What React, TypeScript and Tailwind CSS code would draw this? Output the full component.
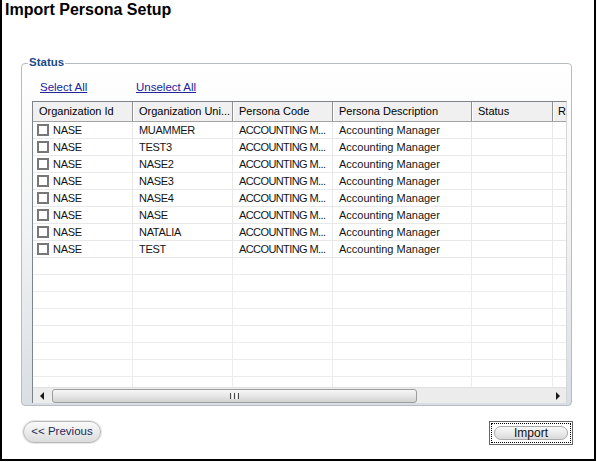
import React from "react";

const rows = ["MUAMMER", "TEST3", "NASE2", "NASE3", "NASE4", "NASE", "NATALIA", "TEST"];
const empty = Array.from({ length: 9 });

const font = { fontFamily: '"Liberation Sans", Arial, sans-serif' };

export default function App() {
  return (
    <div
      className="w-[596px] h-[461px] bg-white border-l-2 border-r-2 border-b-2 border-black flex flex-col"
      style={font}
    >
      <div className="h-[20px] leading-[20px] text-[16px] font-bold text-black pl-[3px]">
        Import Persona Setup
      </div>

      {/* Group box */}
      <div className="relative ml-[19px] mt-[43px] w-[551px] h-[343px] border border-[#b7bcc3] rounded-[4px] bg-gradient-to-b from-white via-[#f1f2f3] to-[#d9dee5] flex flex-col">
        <span className="absolute left-[6px] top-[-8px] px-px bg-white text-[11.5px] leading-[13px] font-bold text-[#1d4a86]">
          Status
        </span>

        <div className="h-[37px] pt-[17px] pl-[18px] flex text-[11.5px] leading-[13px] text-[#23239c]">
          <span className="w-[96px] underline">Select All</span>
          <span className="underline">Unselect All</span>
        </div>

        {/* Grid */}
        <div className="ml-[10px] w-[535px] h-[302px] border-l border-t border-r border-l-[#7f848c] border-t-[#7f848c] border-r-[#d6d6d6] bg-white flex flex-col overflow-hidden">
          {/* header */}
          <div className="h-[20px] flex shrink-0 bg-[#f0f0f0] border-b border-[#a3a3a3] text-[11px] text-black">
            <div className="w-[100px] shrink-0 border-r border-[#8f8f8f] pl-[6px] flex items-center whitespace-nowrap overflow-hidden">Organization Id</div>
            <div className="w-[100px] shrink-0 border-r border-[#8f8f8f] pl-[6px] flex items-center whitespace-nowrap overflow-hidden shadow-[inset_1px_0_0_#ffffff]">Organization Uni...</div>
            <div className="w-[100px] shrink-0 border-r border-[#8f8f8f] pl-[6px] flex items-center whitespace-nowrap overflow-hidden shadow-[inset_1px_0_0_#ffffff]">Persona Code</div>
            <div className="w-[139px] shrink-0 border-r border-[#8f8f8f] pl-[6px] flex items-center whitespace-nowrap overflow-hidden shadow-[inset_1px_0_0_#ffffff]">Persona Description</div>
            <div className="w-[81px] shrink-0 border-r border-[#8f8f8f] pl-[6px] flex items-center whitespace-nowrap overflow-hidden shadow-[inset_1px_0_0_#ffffff]">Status</div>
            <div className="flex-1 pl-[5px] flex items-center whitespace-nowrap overflow-hidden shadow-[inset_1px_0_0_#ffffff]">R</div>
          </div>

          {/* body */}
          <div className="flex-1 overflow-hidden text-[11px] text-[#141414]">
            {rows.map((u, i) => (
              <div key={"r" + i} className="h-[17px] flex border-b border-[#e8e8e8]">
                <div className="w-[100px] shrink-0 border-r border-[#e8e8e8] pl-[4px] flex items-center gap-[4px] whitespace-nowrap overflow-hidden">
                  <span className="w-[12px] h-[12px] border-2 border-[#777777] bg-white shrink-0" />
                  <span className="tracking-[-0.3px]">NASE</span>
                </div>
                <div className="w-[100px] shrink-0 border-r border-[#e8e8e8] pl-[6px] flex items-center whitespace-nowrap overflow-hidden tracking-[-0.3px]">{u}</div>
                <div className="w-[100px] shrink-0 border-r border-[#e8e8e8] pl-[6px] flex items-center whitespace-nowrap overflow-hidden tracking-[-0.6px]">ACCOUNTING M...</div>
                <div className="w-[139px] shrink-0 border-r border-[#e8e8e8] pl-[6px] flex items-center whitespace-nowrap overflow-hidden">Accounting Manager</div>
                <div className="w-[81px] shrink-0 border-r border-[#e8e8e8]" />
                <div className="flex-1" />
              </div>
            ))}
            {empty.map((_, i) => (
              <div key={"e" + i} className="h-[17px] flex border-b border-[#ececec]">
                <div className="w-[100px] shrink-0 border-r border-[#ececec]" />
                <div className="w-[100px] shrink-0 border-r border-[#ececec]" />
                <div className="w-[100px] shrink-0 border-r border-[#ececec]" />
                <div className="w-[139px] shrink-0 border-r border-[#ececec]" />
                <div className="w-[81px] shrink-0 border-r border-[#ececec]" />
                <div className="flex-1" />
              </div>
            ))}
          </div>

          {/* horizontal scrollbar */}
          <div className="h-[16px] shrink-0 flex items-center bg-[#ececec] border-t border-[#e0e0e0]">
            <div className="w-[17px] h-full flex items-center justify-center">
              <span className="w-0 h-0 border-y-[4px] border-y-transparent border-r-[4px] border-r-[#1a1a1a]" />
            </div>
            <div className="ml-[2px] w-[365px] h-[14px] rounded-[3px] border border-[#9c9c9c] bg-gradient-to-b from-[#f7f7f7] via-[#e6e6e6] to-[#d2d2d2] flex items-center justify-center gap-[1px]">
              <span className="w-[1px] h-[6px] bg-[#4a4a4a]" />
              <span className="w-[1px] h-[6px] bg-[#ffffff]" />
              <span className="w-[1px] h-[6px] bg-[#4a4a4a]" />
              <span className="w-[1px] h-[6px] bg-[#ffffff]" />
              <span className="w-[1px] h-[6px] bg-[#4a4a4a]" />
            </div>
            <div className="flex-1" />
            <div className="w-[17px] h-full flex items-center justify-center">
              <span className="w-0 h-0 border-y-[4px] border-y-transparent border-l-[4px] border-l-[#1a1a1a]" />
            </div>
          </div>
        </div>
      </div>

      {/* buttons */}
      <div className="mt-[15px] px-[21px] flex justify-between items-start">
        <div className="w-[78px] h-[22px] rounded-full border border-[#b8b8b8] bg-gradient-to-b from-[#fafafa] to-[#dcdcdc] shadow-[0_0_0_1px_#e8e8e8] flex items-center justify-center text-[11.5px] text-[#1d2a5c]">
          &lt;&lt; Previous
        </div>
        <div className="w-[84px] h-[24px] border border-[#666666] p-px">
          <div className="w-full h-full border border-dotted border-black p-[2px]">
            <div className="w-full h-full rounded-full border border-[#a9a9a9] bg-gradient-to-b from-[#fafafa] to-[#dadada] flex items-center justify-center text-[12px] text-[#111111]">
              Import
            </div>
          </div>
        </div>
      </div>
    </div>
  );
}
